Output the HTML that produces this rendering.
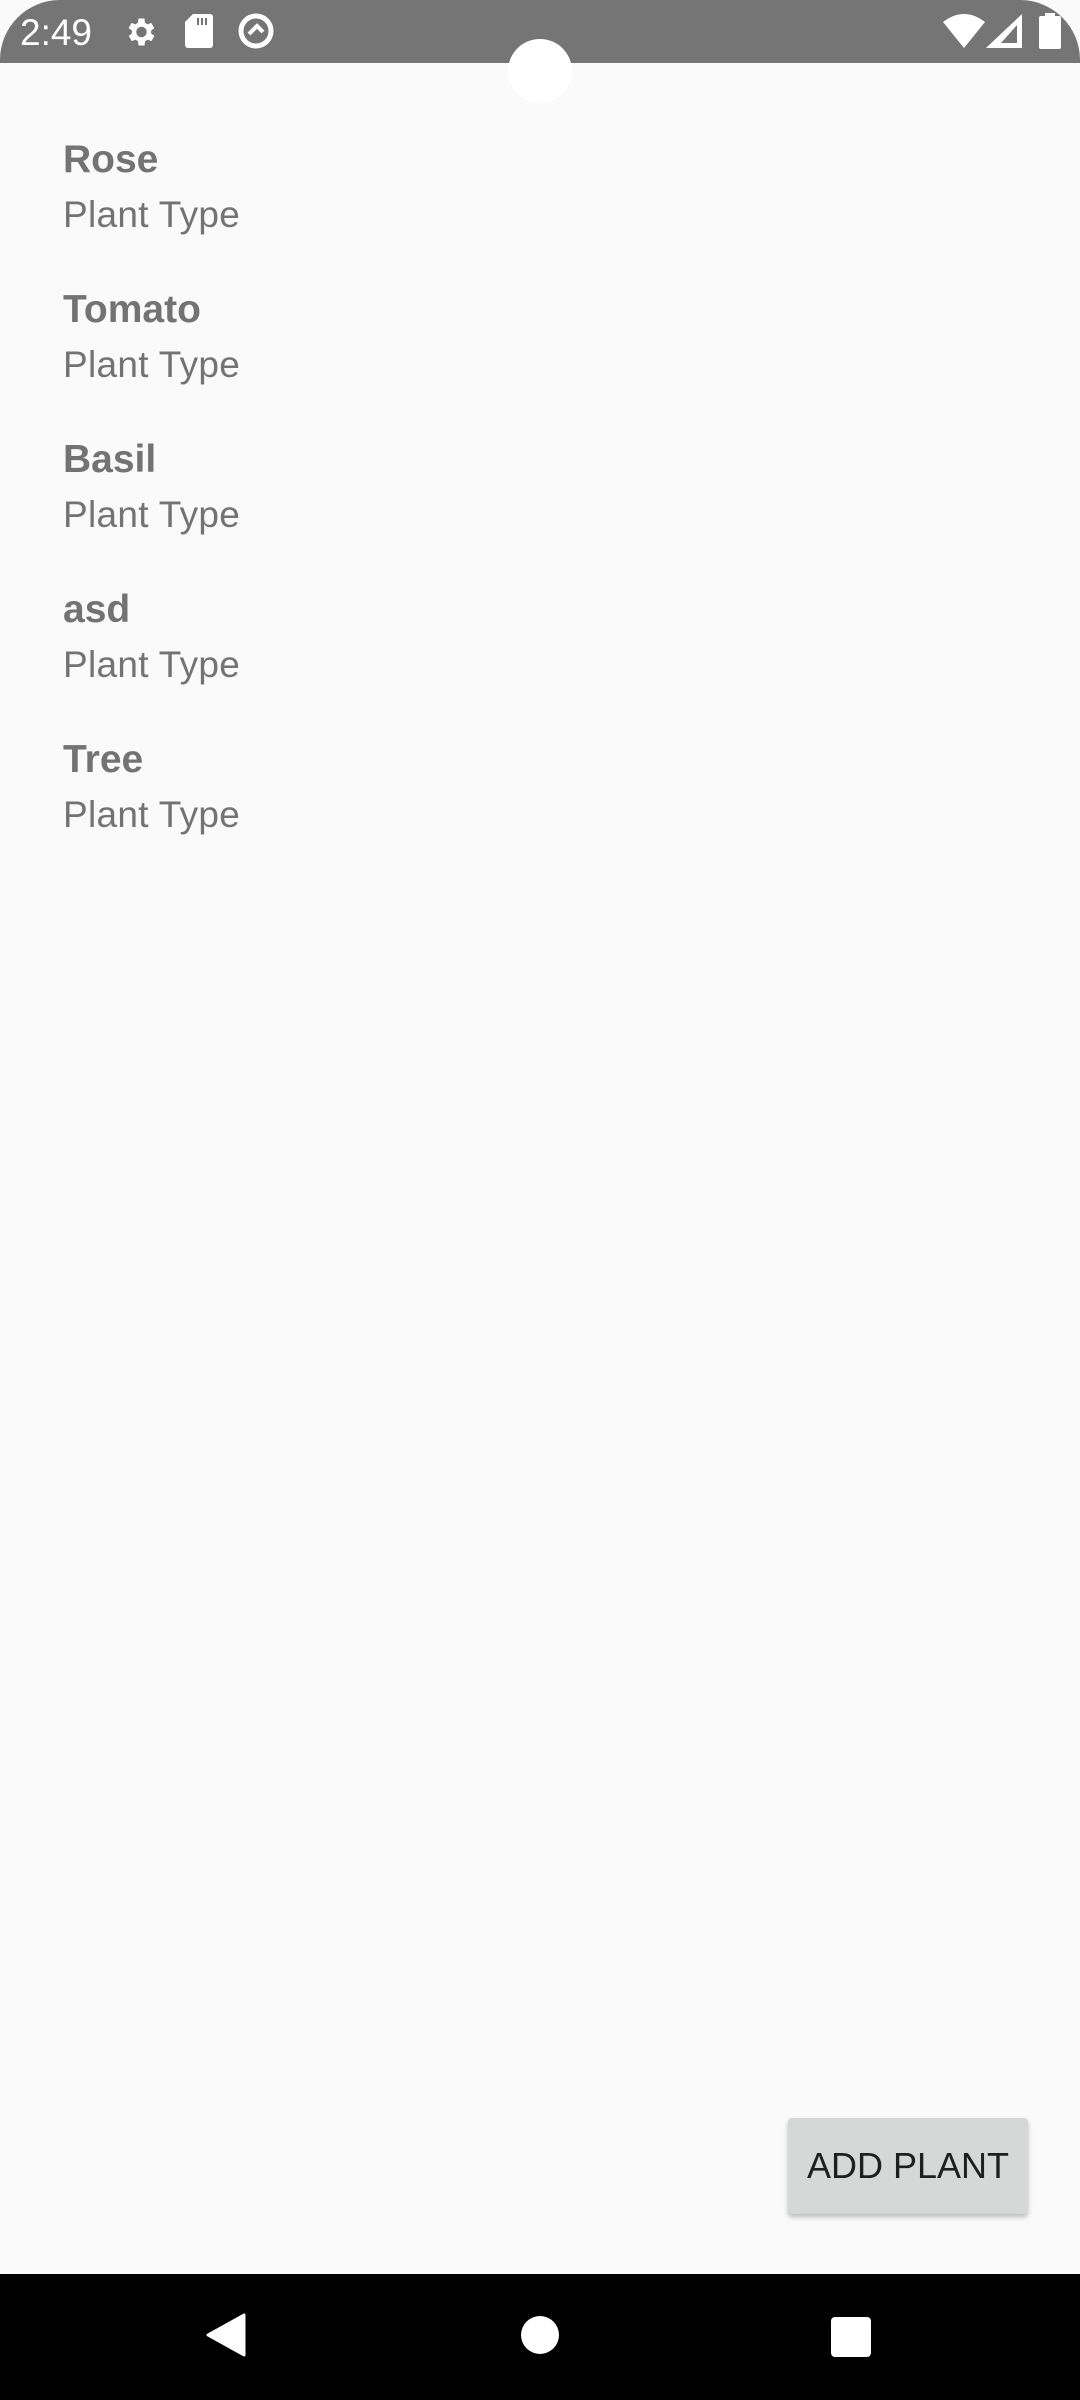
<!DOCTYPE html>
<html><head><style>
body{margin:0;width:1080px;height:2400px;background:#000;position:relative;overflow:hidden;font-family:"Liberation Sans",Roboto,sans-serif}
.screen{position:absolute;left:0;top:0;width:1080px;height:2274px;background:#fafafa}
.sb{position:absolute;left:0;top:0;width:1080px;height:63px;background:#757575;border-radius:60px 60px 0 0}
.time{position:absolute;left:20px;top:12px;color:#fff;font-size:37px}
.cam{position:absolute;left:508px;top:39px;width:64px;height:64px;border-radius:50%;background:#fff}
.item{position:absolute;left:63px;color:#737373}
.t{font-size:39px;font-weight:bold;position:absolute;top:0;white-space:nowrap}
.s{font-size:37px;letter-spacing:0.3px;position:absolute;top:56px;white-space:nowrap}
.btn{position:absolute;left:788px;top:2118px;width:240px;height:96px;background:#d6d7d7;border-radius:4px;box-shadow:0 3px 5px rgba(0,0,0,.25);font-size:36px;color:#1f1f1f;text-align:center;line-height:96px}
.nav{position:absolute;left:0;top:2274px;width:1080px;height:126px;background:#000;border-radius:0 0 70px 70px}
</style></head><body>
<div class="screen">
<div class="sb">
<div class="time">2:49</div>
<svg style="position:absolute;left:122px;top:14px" width="36" height="36" viewBox="0 0 24 24"><path fill="#fff" d="M19.4 13a7.5 7.5 0 000-2l2.1-1.6-2-3.5-2.5 1a7 7 0 00-1.7-1L15 3h-4l-.4 2.9a7 7 0 00-1.7 1l-2.5-1-2 3.5L6.6 11a7.5 7.5 0 000 2l-2.1 1.6 2 3.5 2.5-1a7 7 0 001.7 1L11 21h4l.4-2.9a7 7 0 001.7-1l2.5 1 2-3.5zM13 15.5a3.5 3.5 0 110-7 3.5 3.5 0 010 7z"/></svg>
<svg style="position:absolute;left:185px;top:14px" width="28" height="34" viewBox="0 0 28 34"><path fill="#fff" d="M8 0h17a3 3 0 013 3v28a3 3 0 01-3 3H3a3 3 0 01-3-3V8z"/><rect x="12" y="4" width="2" height="7" fill="#757575"/><rect x="16" y="4" width="2" height="7" fill="#757575"/><rect x="20" y="4" width="2" height="7" fill="#757575"/></svg>
<svg style="position:absolute;left:237px;top:12px" width="38" height="38" viewBox="0 0 38 38"><circle cx="19" cy="19" r="15" fill="none" stroke="#fff" stroke-width="5"/><path d="M12 22l8-8 6 6" fill="none" stroke="#fff" stroke-width="4"/></svg>
<svg style="position:absolute;left:943px;top:14px" width="42" height="34" viewBox="0 0 42 34"><path fill="#fff" d="M0 8Q21-8 42 8L21 34z"/></svg>
<svg style="position:absolute;left:986px;top:14px" width="36" height="34" viewBox="0 0 36 34"><path fill="#fff" d="M36 0V34H0z"/><path fill="#757575" d="M31 11V29H15z"/></svg>
<svg style="position:absolute;left:1039px;top:13px" width="22" height="36" viewBox="0 0 22 36"><rect x="6" y="0" width="10" height="4" fill="#fff"/><rect x="0" y="3" width="22" height="33" rx="2" fill="#fff"/></svg>
</div>
<div class="cam"></div>
<div class="item" style="top:138px"><div class="t">Rose</div><div class="s">Plant Type</div></div>
<div class="item" style="top:288px"><div class="t">Tomato</div><div class="s">Plant Type</div></div>
<div class="item" style="top:438px"><div class="t">Basil</div><div class="s">Plant Type</div></div>
<div class="item" style="top:588px"><div class="t">asd</div><div class="s">Plant Type</div></div>
<div class="item" style="top:738px"><div class="t">Tree</div><div class="s">Plant Type</div></div>
<div class="btn">ADD PLANT</div>
</div>
<div class="nav">
<svg style="position:absolute;left:206px;top:39px" width="40" height="44" viewBox="0 0 40 44"><path fill="#fff" d="M38 2V42L2 22z" stroke="#fff" stroke-width="3" stroke-linejoin="round"/></svg>
<div style="position:absolute;left:521px;top:42px;width:38px;height:38px;border-radius:50%;background:#fff"></div>
<div style="position:absolute;left:831px;top:43px;width:40px;height:40px;border-radius:4px;background:#fff"></div>
</div>
</body></html>
